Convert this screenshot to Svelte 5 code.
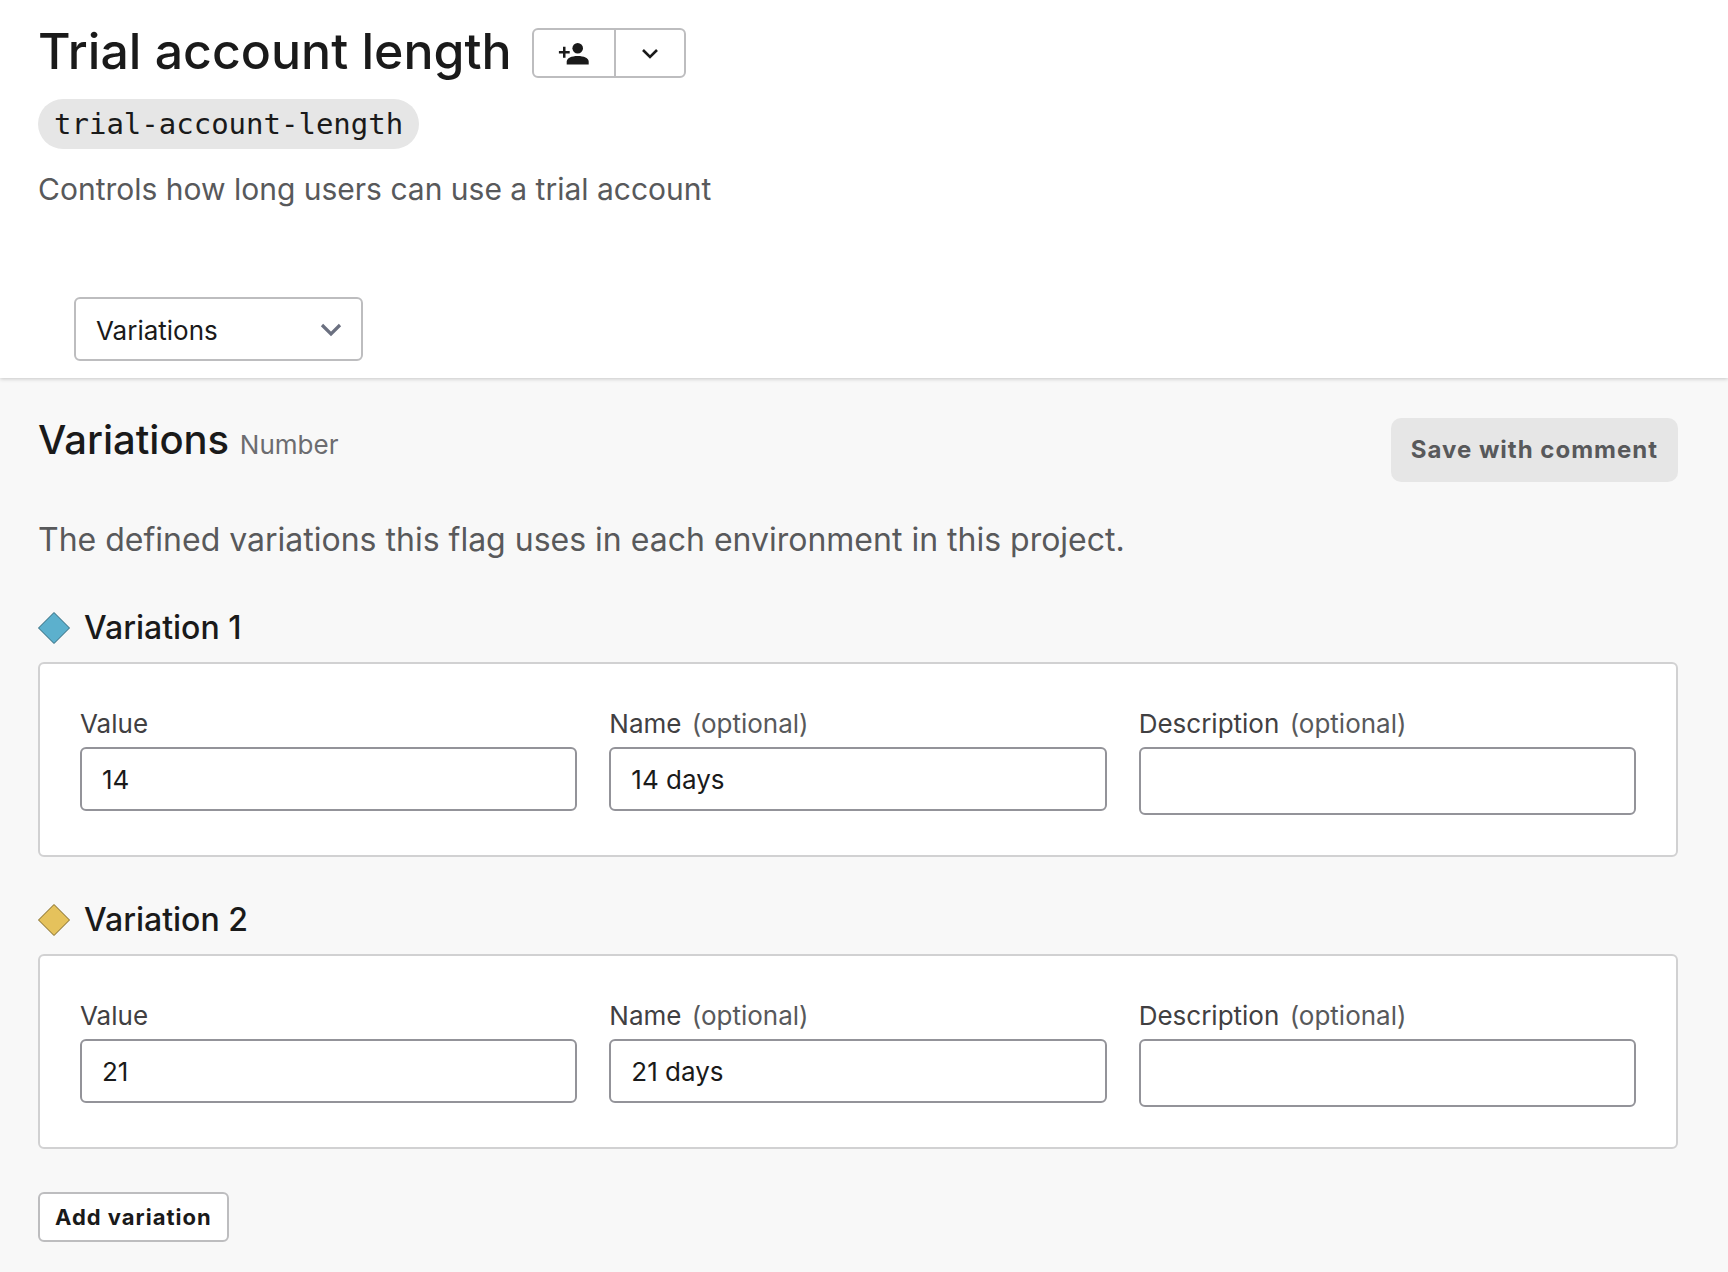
<script>
  let section = $state('Variations');
  let variations = $state([
    { value: '14', name: '14 days', description: '', tone: 'blue' },
    { value: '21', name: '21 days', description: '', tone: 'gold' }
  ]);

  function addVariation() {
    variations.push({ value: '', name: '', description: '', tone: 'blue' });
  }
</script>

<div class="page">
  <header>
    <div class="title-row">
      <h1>Trial account length</h1>
      <div class="button-group">
        <button type="button" class="follow" aria-label="Follow flag">
          <svg width="32" height="24" viewBox="0 0 32 24" fill="#1a1a1a" aria-hidden="true">
            <circle cx="19.700" cy="7.200" r="5.300" />
            <path d="M8.700 23.400V20.800C8.700 17.200 13.500 15.100 19.700 15.100S30.700 17.200 30.700 20.800V23.400Z" />
            <path d="M5 5.800H7.500V10H11.700V12.400H7.500V16.800H5V12.400H.9V10H5Z" />
          </svg>
        </button>
        <button type="button" class="more" aria-label="More actions">
          <svg width="18" height="12" viewBox="0 0 18 12" fill="none" stroke="#1a1a1a" stroke-width="2.600" aria-hidden="true">
            <path d="M2 3L9 10L16 3" />
          </svg>
        </button>
      </div>
    </div>
    <code>trial-account-length</code>
    <p class="summary">Controls how long users can use a trial account</p>
    <div class="select">
      <select aria-label="Section" bind:value={section}>
        <option>Variations</option>
        <option>Targeting</option>
        <option>Settings</option>
      </select>
      <svg width="22" height="14" viewBox="0 0 22 14" fill="none" stroke="#6b7080" stroke-width="3.200" aria-hidden="true">
        <path d="M2 2L11 11L20 2" />
      </svg>
    </div>
  </header>

  <main>
    <div class="section-head">
      <h2>Variations <small>Number</small></h2>
      <button type="button" class="save" disabled>Save with comment</button>
    </div>
    <p class="intro">The defined variations this flag uses in each environment in this project.</p>

    {#each variations as variation, i}
      <section>
        <h3>
          <svg class={variation.tone} width="32" height="32" viewBox="0 0 32 32" aria-hidden="true">
            <path d="M16 .5L31.500 16L16 31.500L.5 16Z" />
          </svg>
          Variation {i + 1}
        </h3>
        <div class="card">
          <div class="field">
            <label for="value-{i}">Value</label>
            <input id="value-{i}" bind:value={variation.value} />
          </div>
          <div class="field">
            <label for="name-{i}">Name <span>(optional)</span></label>
            <input id="name-{i}" bind:value={variation.name} />
          </div>
          <div class="field">
            <label for="description-{i}">Description <span>(optional)</span></label>
            <textarea id="description-{i}" rows="1" bind:value={variation.description}></textarea>
          </div>
        </div>
      </section>
    {/each}

    <button type="button" class="add" onclick={addVariation}>Add variation</button>
  </main>
</div>

<style>
  :global(body) {
    margin: 0;
    background: #f8f8f8;
  }
  .page {
    min-height: 100vh;
    font-family: Inter, 'Liberation Sans', sans-serif;
    color: #1a1a1a;
  }
  h1, h2, h3, p {
    margin: 0;
    font-weight: 400;
  }
  button, input, select, textarea {
    box-sizing: border-box;
    margin: 0;
    font: inherit;
    color: inherit;
  }
  svg {
    display: block;
    flex: none;
  }
  header {
    display: flex;
    flex-direction: column;
    align-items: flex-start;
    padding: 20px 38px 17px;
    background: #fff;
    box-shadow: 0 1px 4px rgba(0, 0, 0, 0.2);
  }
  .title-row {
    display: flex;
    align-items: center;
    gap: 20px;
  }
  h1 {
    padding-bottom: 4px;
    font-size: 50px;
    line-height: 62px;
    font-weight: 500;
  }
  .button-group {
    display: flex;
    box-sizing: border-box;
    height: 50px;
    border: 2px solid #bdbdbf;
    border-radius: 6px;
    background: #fff;
  }
  .button-group button {
    display: flex;
    align-items: center;
    justify-content: center;
    padding: 0;
    border: 0;
    background: none;
  }
  .follow {
    width: 80px;
  }
  .button-group .more {
    width: 70px;
    border-left: 2px solid #bdbdbf;
  }
  code {
    margin-top: 13px;
    padding: 0 16px;
    border-radius: 25px;
    background: #e6e6e6;
    font-family: 'DejaVu Sans Mono', monospace;
    font-size: 29px;
    line-height: 50px;
  }
  .summary {
    margin-top: 20px;
    font-size: 30px;
    line-height: 40px;
    color: #58595b;
  }
  .select {
    position: relative;
    width: 289px;
    margin: 88px 0 0 36px;
  }
  select {
    width: 100%;
    height: 64px;
    padding: 2px 20px 0;
    border: 2px solid #bdbdbf;
    border-radius: 6px;
    background: #fff;
    font-size: 26px;
    appearance: none;
  }
  .select svg {
    position: absolute;
    top: 26px;
    right: 21px;
    pointer-events: none;
  }
  main {
    padding: 40px 50px 30px 38px;
  }
  .section-head {
    display: flex;
    align-items: flex-start;
    justify-content: space-between;
  }
  h2 {
    font-size: 40px;
    line-height: 44px;
    font-weight: 500;
  }
  small {
    font-size: 26px;
    font-weight: 400;
    color: #6c6c70;
  }
  .save {
    height: 64px;
    padding: 0 20px 2px;
    border: 0;
    border-radius: 10px;
    background: #e6e6e6;
    font-size: 24px;
    font-weight: 700;
    letter-spacing: 1px;
    color: #58595b;
  }
  .intro {
    margin: 38px 0 48px;
    font-size: 32px;
    line-height: 40px;
    color: #58595b;
  }
  section {
    margin-bottom: 43px;
  }
  h3 {
    display: flex;
    align-items: center;
    gap: 14px;
    padding-bottom: 14px;
    font-size: 32px;
    line-height: 40px;
    font-weight: 500;
  }
  .blue {
    fill: #5cb0cd;
    stroke: #2d6478;
  }
  .gold {
    fill: #e5c25c;
    stroke: #7d6423;
  }
  .card {
    display: grid;
    grid-template-columns: repeat(3, minmax(0, 1fr));
    gap: 32px;
    padding: 40px;
    border: 2px solid #d1d1d2;
    border-radius: 6px;
    background: #fff;
  }
  .field {
    display: flex;
    flex-direction: column;
    gap: 3px;
  }
  label {
    font-size: 26px;
    line-height: 40px;
    color: #414042;
  }
  label span {
    margin-left: 3px;
    color: #58595b;
  }
  input, textarea {
    width: 100%;
    height: 64px;
    padding: 0 20px;
    border: 2px solid #939399;
    border-radius: 6px;
    background: #fff;
    font-size: 26px;
  }
  textarea {
    height: 68px;
    padding: 14px 20px;
    line-height: 32px;
    resize: none;
  }
  .add {
    height: 50px;
    padding: 0 15px;
    border: 2px solid #bdbdbf;
    border-radius: 6px;
    background: #fff;
    font-size: 22px;
    font-weight: 700;
    letter-spacing: 1px;
  }
</style>
